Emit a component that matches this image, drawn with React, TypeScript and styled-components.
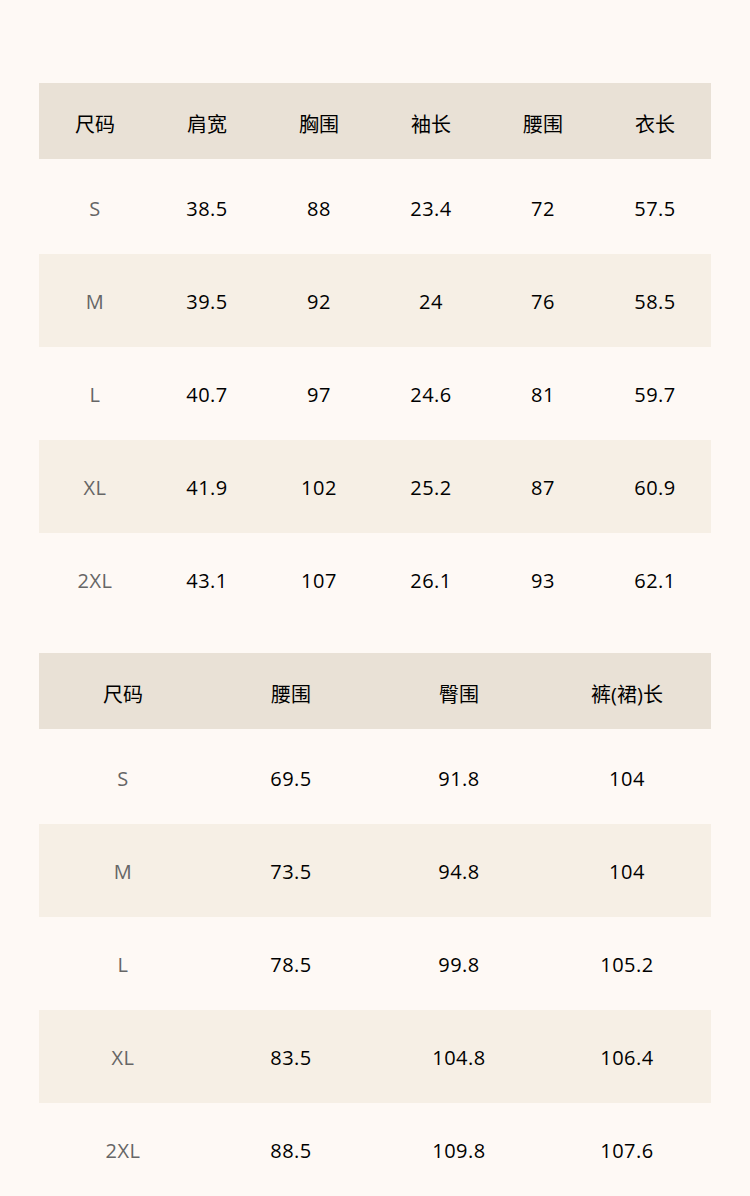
import styled, { createGlobalStyle } from 'styled-components'

const GlobalStyle = createGlobalStyle`
  html, body {
    margin: 0;
    padding: 0;
    background: #fef9f5;
  }
  body {
    font-family: 'Open Sans', 'Noto Sans CJK SC', sans-serif;
  }
`

type TableData = {
  head: string[]
  rows: string[][]
}

const tops: TableData = {
  head: ['尺码', '肩宽', '胸围', '袖长', '腰围', '衣长'],
  rows: [
    ['S', '38.5', '88', '23.4', '72', '57.5'],
    ['M', '39.5', '92', '24', '76', '58.5'],
    ['L', '40.7', '97', '24.6', '81', '59.7'],
    ['XL', '41.9', '102', '25.2', '87', '60.9'],
    ['2XL', '43.1', '107', '26.1', '93', '62.1'],
  ],
}

const bottoms: TableData = {
  head: ['尺码', '腰围', '臀围', '裤(裙)长'],
  rows: [
    ['S', '69.5', '91.8', '104'],
    ['M', '73.5', '94.8', '104'],
    ['L', '78.5', '99.8', '105.2'],
    ['XL', '83.5', '104.8', '106.4'],
    ['2XL', '88.5', '109.8', '107.6'],
  ],
}

const SizeTable: React.FC<{ data: TableData }> = ({ data }) => {
  const cols = data.head.length
  return (
    <Table>
      <HeadRow $cols={cols}>
        {data.head.map((h) => (
          <HeadCell key={h}>{h}</HeadCell>
        ))}
      </HeadRow>
      {data.rows.map((row, i) => (
        <BodyRow key={row[0]} $cols={cols} $striped={i % 2 === 1} $first={i === 0}>
          {row.map((v, j) => (
            <Cell key={j} $label={j === 0}>
              {v}
            </Cell>
          ))}
        </BodyRow>
      ))}
    </Table>
  )
}

export default function App() {
  return (
    <>
      <GlobalStyle />
      <Page>
        <SizeTable data={tops} />
        <SizeTable data={bottoms} />
      </Page>
    </>
  )
}

const Page = styled.div`
  display: flex;
  flex-direction: column;
  gap: 27px;
  padding: 83px 39px 40px;
`

const Table = styled.div`
  display: flex;
  flex-direction: column;
  width: 672px;
`

const HeadRow = styled.div<{ $cols: number }>`
  display: grid;
  grid-template-columns: repeat(${(p) => p.$cols}, 1fr);
  align-items: center;
  height: 76px;
  padding-top: 4px;
  box-sizing: border-box;
  background: #e9e1d6;
`

const HeadCell = styled.div`
  text-align: center;
  font-size: 20px;
  color: #000;
`

const BodyRow = styled.div<{ $cols: number; $striped: boolean; $first: boolean }>`
  display: grid;
  grid-template-columns: repeat(${(p) => p.$cols}, 1fr);
  align-items: center;
  height: ${(p) => (p.$first ? 95 : 93)}px;
  padding-top: ${(p) => (p.$first ? 4 : 2)}px;
  box-sizing: border-box;
  background: ${(p) => (p.$striped ? '#f6efe5' : 'transparent')};
`

const Cell = styled.div<{ $label: boolean }>`
  text-align: center;
  font-size: 20px;
  letter-spacing: 0.5px;
  color: ${(p) => (p.$label ? '#666' : '#000')};
`
